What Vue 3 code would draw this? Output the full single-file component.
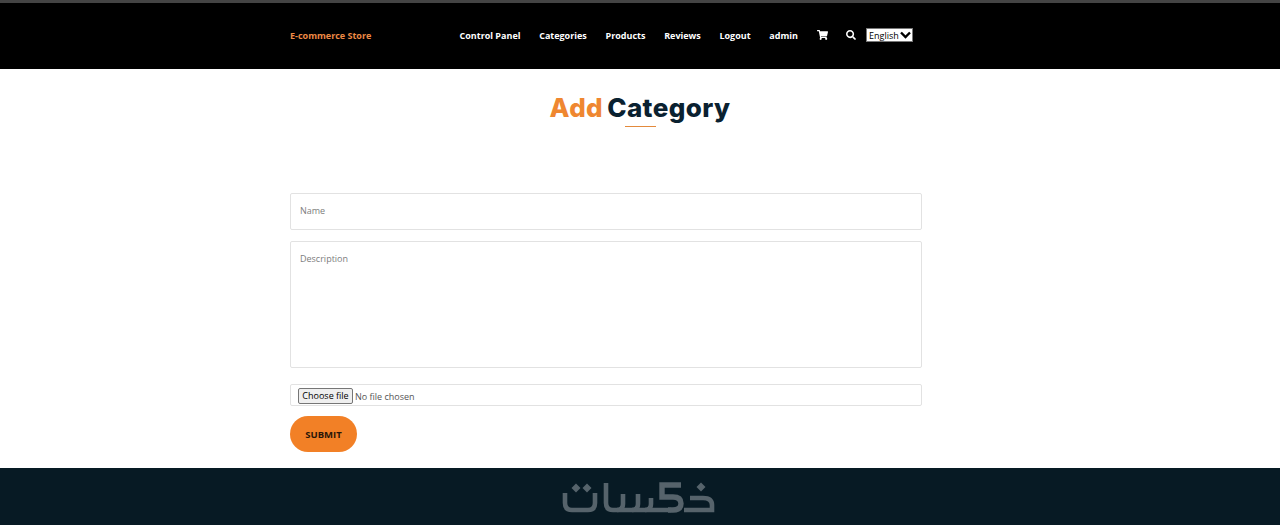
<script setup>
const links = ["Control Panel", "Categories", "Products", "Reviews", "Logout", "admin"];
</script>

<template>
  <div class="page">
    <header class="topbar">
      <div class="topbar-inner">
        <a class="brand" href="#">E-commerce Store</a>
        <nav class="nav">
          <a v-for="link in links" :key="link" href="#">{{ link }}</a>
          <a href="#" class="icon-link" aria-label="Cart">
            <svg width="11" height="10" viewBox="0 0 576 512" fill="#fff">
              <path d="M528 301l47-208c3-15-8-29-23-29H159l-9-45C148 8 138 0 127 0H24C11 0 0 11 0 24v16c0 13 11 24 24 24h70l70 343c-17 10-28 28-28 49 0 31 25 56 56 56s56-25 56-56c0-16-6-30-17-40h210c-11 10-17 24-17 40 0 31 25 56 56 56s56-25 56-56c0-22-13-41-32-50l5-24c3-15-8-29-23-29H211l-6-32h299c11 0 21-8 24-19z" />
            </svg>
          </a>
          <a href="#" class="icon-link" aria-label="Search">
            <svg width="10" height="10" viewBox="0 0 512 512" fill="#fff">
              <path d="M505 443L405 343c-4-4-11-7-17-7h-16c28-35 44-80 44-128C416 93 323 0 208 0S0 93 0 208s93 208 208 208c48 0 93-16 128-44v16c0 6 3 13 7 17l100 100c9 9 25 9 34 0l28-28c9-10 9-25 0-34zM208 336c-71 0-128-57-128-128S137 80 208 80s128 57 128 128-57 128-128 128z" />
            </svg>
          </a>
          <div class="lang-wrap">
            <select class="lang">
              <option>English</option>
            </select>
            <svg class="chevron" width="11" height="8" viewBox="0 0 11 8" fill="none" stroke="#000" stroke-width="2.4">
              <path d="M1 1.5l4.5 4.5L10 1.5" />
            </svg>
          </div>
        </nav>
      </div>
    </header>

    <main class="content">
      <h1 class="title"><span>Add</span> Category</h1>
      <div class="rule"></div>
      <form class="form" @submit.prevent>
        <input class="field name" type="text" placeholder="Name" />
        <textarea class="field area" placeholder="Description"></textarea>
        <label class="field file">
          <input class="file-input" type="file" />
          <span class="file-btn">Choose file</span>
          <span class="file-text">No file chosen</span>
        </label>
        <button class="submit" type="submit">SUBMIT</button>
      </form>
    </main>

    <footer class="footer">
      <svg class="logo" width="164" height="40" viewBox="558 478 164 40" fill="none" stroke="#56636b" stroke-width="4.6">
        <path d="M565 493v10q0 7 7 7h16q7 0 7-7v-10" />
        <path d="M606 483v20q0 7 7 7h58" />
        <path d="M623 494v10q0 6-6 6M638 494v10q0 6-6 6M651 498v6q0 6-6 6" />
        <path d="M681 485h-19v12h11q8 0 8 6.5t-8 6.5h-5" stroke-width="5.4" />
        <path d="M690 498h13q9 0 9 7v5h-28" />
        <g fill="#56636b" stroke="none">
          <path d="M576 483.5l4.5 4.5-4.5 4.5-4.5-4.5z" />
          <path d="M587 483.5l4.5 4.5-4.5 4.5-4.5-4.5z" />
          <path d="M701 482.5l4.5 4.5-4.5 4.5-4.5-4.5z" />
        </g>
      </svg>
    </footer>
  </div>
</template>

<style>
body {
  background: #fff;
}
</style>

<style scoped>
.page {
  font-family: "Open Sans", sans-serif;
  height: 525px;
  display: flex;
  flex-direction: column;
  overflow: hidden;
}

.topbar {
  box-sizing: border-box;
  height: 69px;
  flex: none;
  background: #000;
  border-top: 3px solid #444;
  display: flex;
  align-items: center;
  padding-bottom: 2px;
}

.topbar-inner {
  margin-left: 290px;
  display: flex;
  align-items: center;
}

.brand {
  width: 169.5px;
  font-size: 9px;
  font-weight: 700;
  color: #ee8a45;
  text-decoration: none;
}

.nav {
  display: flex;
  align-items: center;
  gap: 18.7px;
}

.nav a {
  font-size: 9px;
  font-weight: 700;
  color: #fff;
  text-decoration: none;
}

.icon-link {
  display: flex;
  align-items: center;
}

.lang-wrap {
  position: relative;
  margin-left: -9px;
  display: flex;
}

.lang {
  appearance: none;
  box-sizing: border-box;
  width: 47px;
  height: 14px;
  padding: 0 0 0 2px;
  font-family: "Open Sans", sans-serif;
  font-size: 9px;
  background: #fff;
  color: #000;
  border: 1px solid #777;
  border-radius: 0;
}

.chevron {
  position: absolute;
  right: 2px;
  top: 3px;
}

.content {
  flex: 1;
  display: flex;
  flex-direction: column;
  align-items: center;
}

.title {
  margin: 24px 0 0;
  font-family: "Inter", sans-serif;
  font-size: 26px;
  line-height: 30px;
  font-weight: 800;
  letter-spacing: 0.4px;
  word-spacing: -2px;
  color: #0a2130;
}

.title span {
  color: #ef8730;
}

.rule {
  width: 31px;
  height: 1px;
  margin-top: 3px;
  background: #e38a3c;
}

.form {
  align-self: flex-start;
  width: 632px;
  margin: 66px 0 0 290px;
  display: flex;
  flex-direction: column;
}

.field {
  box-sizing: border-box;
  width: 100%;
  height: 37px;
  padding: 0 9px;
  font-family: "Open Sans", sans-serif;
  font-size: 9px;
  color: #333;
  background: #fff;
  border: 1px solid #e2e2e2;
  border-radius: 2px;
  outline: none;
}

.field::placeholder {
  color: #7d7d7d;
}

.name {
  padding-bottom: 2px;
}

.area {
  display: block;
  height: 127px;
  margin-top: 11px;
  padding: 10px 9px;
  resize: none;
}

.file {
  height: 22px;
  margin-top: 16px;
  padding: 4px 7px 2px;
  display: flex;
  align-items: center;
  gap: 2px;
  color: #555;
}

.file-input {
  display: none;
}

.file-btn {
  box-sizing: border-box;
  width: 55px;
  height: 16px;
  line-height: 14px;
  text-align: center;
  color: #000;
  background: #efefef;
  border: 1px solid #767676;
  border-radius: 2px;
}

.file-text {
  padding-top: 1px;
}

.submit {
  width: 67px;
  height: 36px;
  margin-top: 10px;
  font-family: "Open Sans", sans-serif;
  font-size: 9.5px;
  font-weight: 700;
  color: #2a1608;
  background: #f28026;
  border: none;
  border-radius: 18px;
}

.footer {
  height: 57px;
  flex: none;
  background: #071a24;
  display: flex;
  justify-content: center;
  padding-top: 10px;
  box-sizing: border-box;
}
</style>
